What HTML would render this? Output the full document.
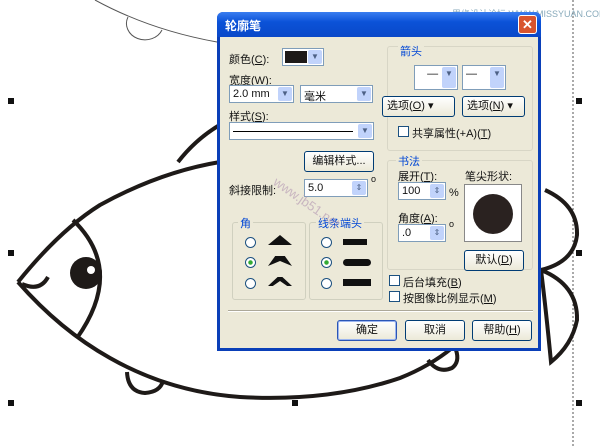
<!DOCTYPE html>
<html><head><meta charset="utf-8"><style>
*{margin:0;padding:0;box-sizing:border-box}
body{width:600px;height:448px;background:#fff;position:relative;overflow:hidden;font-family:"Liberation Sans","Noto Sans CJK SC",sans-serif;font-size:11px;color:#111}
.a{position:absolute}
.dlg{left:217px;top:12px;width:324px;height:339px;background:#0a3fb8;border-radius:6px 6px 0 0}
.title{left:0;top:0;width:324px;height:25px;background:linear-gradient(#3a7ef0,#0b52d8 40%,#0a48c8);border-radius:6px 6px 0 0;color:#fff;font-weight:bold;font-size:12px;padding:5px 8px}
.close{right:4px;top:3px;width:19px;height:19px;background:#d8542e;border:1px solid #fff;border-radius:3px;color:#fff;font-size:13px;text-align:center;line-height:17px;font-weight:bold}
.body{left:3px;top:25px;width:318px;height:311px;background:#ece9d8}
.inp{background:#fff;border:1px solid #7f9db9;height:18px;padding:2px 3px}
.dd{position:absolute;right:1px;top:1px;width:14px;height:14px;background:#c1d3fb;border-radius:2px;color:#4d6185;font-size:8px;text-align:center;line-height:14px}
.btn{background:linear-gradient(#fff,#ece9d8);border:1px solid #003c74;border-radius:3px;text-align:center;height:21px;line-height:19px}
.grp{border:1px solid #d0d0bf;border-radius:3px}
.gl{color:#0046d5;background:#ece9d8;padding:0 2px}
.cb{width:11px;height:11px;border:1px solid #1c5180;background:#fff}
.rd{width:11px;height:11px;border:1px solid #1c5180;border-radius:50%;background:#fff}
</style></head><body>
<svg class="a" style="left:0;top:0" width="600" height="448">
<path d="M95 0 Q150 30 217 42" stroke="#555" fill="none" stroke-width="1"/>
<path d="M128 17 A17 15 0 0 0 162 30" stroke="#555" fill="none"/>
<line x1="573" y1="0" x2="573" y2="448" stroke="#555" stroke-dasharray="2,2"/>
<g stroke="#1e1a18" stroke-width="4" fill="none">
<path d="M18 282 Q60 230 100 205 Q160 172 220 162"/>
<path d="M178 162 Q195 140 218 126"/>
<path d="M18 282 Q60 330 110 358 Q170 392 240 397 Q330 402 400 378 Q430 366 452 348"/>
<path d="M428 360 Q438 374 452 368 Q460 362 456 350"/>
<path d="M73 220 Q125 270 77 338"/>
<path d="M22 284 Q40 292 48 277"/>
<path d="M127 372 Q128 392 145 393 Q160 392 163 381"/>
<path d="M545 190 Q578 205 577 235 Q574 262 541 270"/>
<path d="M541 270 Q578 285 577 320 Q572 345 551 362 Q546 310 541 270"/>
</g>
<circle cx="86" cy="273" r="16" fill="#1e1a18"/>
<circle cx="91" cy="270" r="4" fill="#fff"/>
<g fill="#111"><rect x="8" y="98" width="6" height="6"/><rect x="8" y="250" width="6" height="6"/><rect x="8" y="400" width="6" height="6"/><rect x="292" y="400" width="6" height="6"/><rect x="576" y="98" width="6" height="6"/><rect x="576" y="250" width="6" height="6"/><rect x="576" y="400" width="6" height="6"/></g>
<text x="452" y="17" font-size="9" fill="#8ab" font-family="Liberation Sans,Noto Sans CJK SC,sans-serif">思缘设计论坛 WWW.MISSYUAN.COM</text>
</svg>
<div class="a dlg">
<div class="a title">轮廓笔</div>
<div class="a close">✕</div>
<div class="a body">
<div class="a" style="left:9px;top:14px">颜色(<u>C</u>):</div>
<div class="a inp" style="left:62px;top:11px;width:42px;padding:2px"><div style="width:22px;height:12px;background:#1e1a18"></div><div class="dd">▼</div></div>
<div class="a" style="left:9px;top:35px">宽度(<u>W</u>):</div>
<div class="a inp" style="left:9px;top:48px;width:65px">2.0 mm<div class="dd">▼</div></div>
<div class="a inp" style="left:80px;top:48px;width:73px">毫米<div class="dd">▼</div></div>
<div class="a" style="left:9px;top:71px">样式(<u>S</u>):</div>
<div class="a inp" style="left:9px;top:85px;width:145px"><div style="border-top:1px solid #000;width:120px;margin-top:6px"></div><div class="dd">▼</div></div>
<div class="a btn" style="left:84px;top:114px;width:70px">编辑样式...</div>
<div class="a" style="left:9px;top:145px">斜接限制:</div>
<div class="a inp" style="left:84px;top:142px;width:64px">5.0<div class="dd">⇕</div></div>
<div class="a" style="left:151px;top:137px;font-size:9px">o</div>
<div class="a grp" style="left:12px;top:185px;width:74px;height:78px"></div>
<div class="a gl" style="left:18px;top:178px">角</div>
<div class="a grp" style="left:89px;top:185px;width:74px;height:78px"></div>
<div class="a gl" style="left:96px;top:178px">线条端头</div>
<div class="a rd" style="left:25px;top:200px"></div><div class="a rd" style="left:25px;top:220px;background:radial-gradient(#3a3 30%,#fff 40%)"></div><div class="a rd" style="left:25px;top:241px"></div>
<div class="a" style="left:48px;top:198px;width:0;height:0;border-left:12px solid transparent;border-right:12px solid transparent;border-bottom:10px solid #111"></div>
<div class="a" style="left:48px;top:219px;width:24px;height:10px;background:#111;clip-path:polygon(0 100%,30% 0,70% 0,100% 100%,50% 50%)"></div>
<div class="a" style="left:48px;top:240px;width:24px;height:9px;background:#111;clip-path:polygon(0 100%,40% 0,60% 0,100% 100%,80% 100%,50% 45%,20% 100%)"></div>
<div class="a rd" style="left:101px;top:200px"></div><div class="a rd" style="left:101px;top:220px;background:radial-gradient(#3a3 30%,#fff 40%)"></div><div class="a rd" style="left:101px;top:241px"></div>
<div class="a" style="left:123px;top:202px;width:24px;height:6px;background:#111"></div>
<div class="a" style="left:123px;top:222px;width:28px;height:7px;background:#111;border-radius:4px"></div>
<div class="a" style="left:123px;top:242px;width:28px;height:7px;background:#111"></div>
<div class="a" style="left:167px;top:9px;width:146px;height:105px;border:1px solid #d8d6c6;border-radius:3px"></div>
<div class="a gl" style="left:178px;top:6px">箭头</div>
<div class="a inp" style="left:194px;top:28px;width:44px;height:25px">&nbsp;&nbsp;&nbsp;—<div class="dd" style="height:21px">▼</div></div>
<div class="a inp" style="left:242px;top:28px;width:44px;height:25px">—<div class="dd" style="height:21px">▼</div></div>
<div class="a btn" style="left:162px;top:59px;width:73px;text-align:left;padding-left:4px">选项(<u>O</u>) ▾</div>
<div class="a btn" style="left:242px;top:59px;width:63px;text-align:left;padding-left:4px">选项(<u>N</u>) ▾</div>
<div class="a cb" style="left:178px;top:89px"></div>
<div class="a" style="left:192px;top:88px">共享属性(+A)(<u>T</u>)</div>
<div class="a" style="left:167px;top:123px;width:146px;height:110px;border:1px solid #d8d6c6;border-radius:3px"></div>
<div class="a gl" style="left:176px;top:116px">书法</div>
<div class="a" style="left:178px;top:131px">展开(<u>T</u>):</div>
<div class="a inp" style="left:178px;top:145px;width:48px">100<div class="dd">⇕</div></div>
<div class="a" style="left:229px;top:150px">%</div>
<div class="a" style="left:178px;top:173px">角度(<u>A</u>):</div>
<div class="a inp" style="left:178px;top:187px;width:48px">.0<div class="dd">⇕</div></div>
<div class="a" style="left:229px;top:182px;font-size:9px">o</div>
<div class="a" style="left:245px;top:131px">笔尖形状:</div>
<div class="a" style="left:244px;top:147px;width:58px;height:58px;background:#fff;border:1px solid #888"><div style="margin:9px auto;width:40px;height:40px;border-radius:50%;background:#2a2220"></div></div>
<div class="a btn" style="left:244px;top:213px;width:60px">默认(<u>D</u>)</div>
<div class="a cb" style="left:169px;top:238px"></div><div class="a" style="left:183px;top:237px">后台填充(<u>B</u>)</div>
<div class="a cb" style="left:169px;top:254px"></div><div class="a" style="left:183px;top:253px">按图像比例显示(<u>M</u>)</div>
<div class="a" style="left:8px;top:273px;width:305px;border-top:1px solid #aca899;border-bottom:1px solid #fff"></div>
<div class="a btn" style="left:117px;top:283px;width:60px;border-color:#2b55b5;box-shadow:inset 0 0 0 1px #9bb5ef">确定</div>
<div class="a btn" style="left:185px;top:283px;width:60px">取消</div>
<div class="a btn" style="left:252px;top:283px;width:60px">帮助(<u>H</u>)</div>
</div></div>
<div class="a" style="left:268px;top:195px;transform:rotate(35deg);color:#b9a0b6;font-size:13px;opacity:.7">www.jb51.net</div>
</body></html>
